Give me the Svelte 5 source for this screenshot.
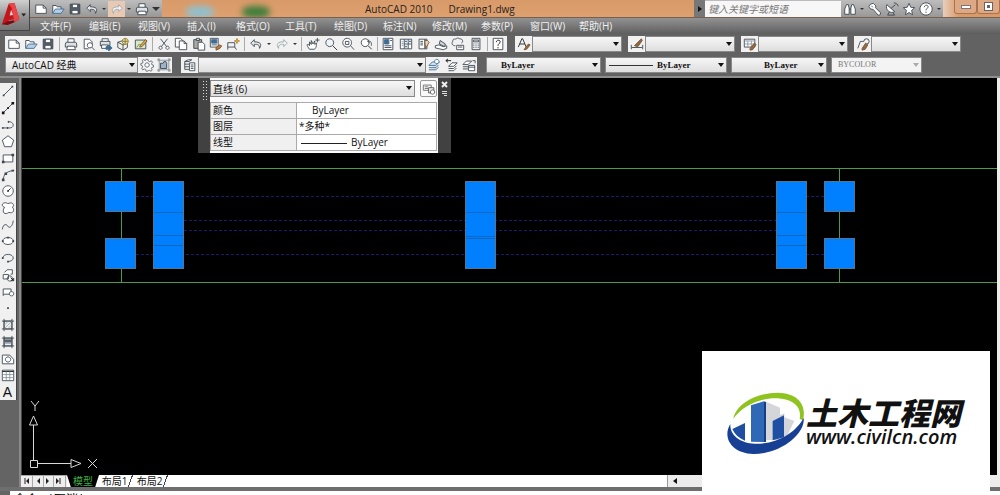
<script>
	const ink = '#3b4650';
	const blue = '#3f6c94';
	const gold = '#d9b24c';
	const brown = '#7a5230';

	// each icon is a list of [path, fill, stroke] on a 16 x 16 grid
	const icons = {
		new: [['M2 3.5h8.5l3.5 3.5v6H2z', '#fff', ink], ['M10.5 3.5V7H14', 'none', ink]],
		open: [['M2 13V4h4l1 1.500h4.500V8', '#fff', ink], ['M2 13l3-5h10l-3.500 5z', '#b7cfe6', blue]],
		save: [['M2.500 2.500h11v11h-11z', '#56616b', ink], ['M5 2.500h6v4H5z', '#fff', ink], ['M4.500 9.500h7v4h-7z', '#fff', ink]],
		print: [['M4.500 6V2h7v4', '#fff', ink], ['M2.500 6h11l1 2v3.500h-13V8z', '#dfe3e6', ink], ['M4 10.500h8l1 4H3z', '#fff', ink]],
		preview: [['M2.500 13.500v-11h6l3 3v3', '#fff', ink], ['M2.500 13.500h5', 'none', ink], ['M9 6.500a3 3 0 1 0 .1 0zM11 11.500l3.500 3.500', '#fff', ink]],
		publish: [['M3.500 5V2h7v3', '#fff', ink], ['M1.500 5h11v5h-11z', '#dfe3e6', ink], ['M3 9h7v4H3z', '#fff', ink], ['M8 11h3V9l4 3.500-4 3.500v-2H8z', blue, blue]],
		dwf: [['M2 6l6-2 5 3v5l-5 3-6-3z', '#f1f1e6', ink], ['M2 6l6 3v6M8 9l5-2', 'none', ink], ['M10.500 1.500a3.500 3.500 0 1 0 .1 0z', '#e3d58b', '#8b7d3a'], ['M7.500 5h6.500M10.500 1.500v7', 'none', '#8b7d3a']],
		sketch: [['M1.500 3.500h12v10h-12z', '#dce7c9', ink], ['M3 12l3-4 3 2 4-3', 'none', '#5b8a45'], ['M7 10l6-7 2 1.500-6 6.500-2.500.5z', gold, brown]],
		cut: [['M4 2l7 9M12 2l-7 9', 'none', ink], ['M4 10.500a1.800 1.800 0 1 0 .1 0zM12 10.500a1.800 1.800 0 1 0 .1 0z', '#fff', ink]],
		copy: [['M1.500 1.500h6l2 2v8h-8z', '#fff', ink], ['M6 4.500h5.500l3 3v7H6z', '#fff', ink], ['M11.500 4.500v3h3', 'none', ink]],
		paste: [['M2 3h9v10H2z', '#a9a9a0', ink], ['M5 1.500h3.500V4H5z', '#ddd', ink], ['M7 6h5l2.500 2.500v6.500H7z', '#fff', ink]],
		match: [['M1.500 1.500h9v10h-9z', '#fff', ink], ['M3 3h6v4H3z', blue, blue], ['M3 9h6', 'none', ink], ['M8 12l4-3 2.500 1-2 3-4.500 2z', '#b57f3c', brown]],
		block: [['M2 6.500h8v5H2zM2 11.500v3M10 11.500l2 3', 'none', ink], ['M12.500 1.500l.8 2.200 2.200.8-2.200.8-.8 2.200-.8-2.200-2.200-.8 2.200-.8z', gold, '#b58a2a']],
		undo: [['M6 3L2 7l4 4V8.500c4-.5 6 .5 6 4.500 3-5 1-7.500-6-7.500z', '#e4e8eb', ink]],
		redo: [['M10 3l4 4-4 4V8.500c-4-.5-6 .5-6 4.500-3-5-1-7.500 6-7.500z', '#f3f3f3', '#9aa3aa']],
		pan: [['M4 14c-3-4-3-5-2-6l2 2V5.500l2 3V4l2 4 2-3.500v4L12 7c0 4-1 7-3 7z', '#fff', ink], ['M13 1v5M10.500 3.500h5', 'none', ink]],
		zoom: [['M6.500 2a4.500 4.500 0 1 0 .1 0z', '#eef4f8', ink], ['M10 10l5 5', 'none', '#222']],
		zoomWindow: [['M7 1.500a5 5 0 1 0 .1 0z', '#fff', ink], ['M5 5h4v3.500H5z', 'none', ink], ['M11 10l4 4.500', 'none', ink]],
		zoomPrev: [['M7 2a4.500 4.500 0 1 0 .1 0z', '#fff', ink], ['M10.500 10l4 4', 'none', '#222'], ['M14 10c1-4-1-6-4-5l1-2M10 5l2 2', 'none', ink]],
		props: [['M2.500 1.500h11v13h-11z', '#fff', ink], ['M4 3h5v5H4z', blue, blue], ['M4 10h8M4 12h8M10.500 4h2', 'none', ink]],
		center: [['M1.500 2.500h13v11h-13z', '#fff', ink], ['M6 2.500v11M10.500 2.500v11M6 8h8', 'none', ink], ['M7.500 4.500h1v1h-1zM12 4.500h1v1h-1zM7.500 10.500h1v1h-1z', blue, blue], ['M3 5.500h2M3 7.500h2M3 9.500h2', 'none', '#89939b']],
		palette: [['M3.500 2.500h9v11h-9z', '#fff', ink], ['M10 2.500v11M5 5h3M5 7h3M5 9h3', 'none', ink], ['M10 4h3l2 2-4 7z', '#e2d7c3', brown]],
		sheetset: [['M1.500 10l4-1 5 2 4-1v3l-4 1.500-9-2z', '#fff', ink], ['M6 8l1-4 6 4-1 3z', '#ccd5dc', ink]],
		markup: [['M2 5c0-4 3-2 4-3 2-2 3 0 4 0 4 0 4 4 2 5', 'none', ink], ['M2 5c-2 3 0 5 3 5', 'none', ink], ['M6.500 9.500h8v5h-8z', '#fff', ink], ['M8 11.500h5', 'none', ink]],
		calc: [['M3.500 1.500h9v13h-9z', '#eee', ink], ['M5 3.500h6v2H5z', '#fff', ink], ['M5 8h1M7.500 8h1M10 8h1M5 10h1M7.500 10h1M10 10h1M5 12h1M7.500 12h1M10 12h1', 'none', ink]],
		help: [['M2.500 1.500h11v13h-11z', '#fff', ink], ['M6 6c0-3 4.500-3 4.500-.5C10.500 7.500 8 7 8 10M8 11.500v1.500', 'none', '#111']],
		textStyle: [['M1.500 11.500L5.500 2h1l4 9.500M3 8h6', 'none', '#222'], ['M9 13l4-5 2 1-4 5-3 .5z', '#8d6a44', brown]],
		dimStyle: [['M1.500 9v5M14.500 9v5M2 12h12', 'none', ink], ['M5 10l8-8 1 2-5 7z', '#8d6a44', brown]],
		tableStyle: [['M1.500 2.500h12v9h-12z', '#fff', ink], ['M1.500 4.500h12M1.500 8h12M5.500 4.500v7M9.500 4.500v7', 'none', '#89939b'], ['M8 13l5-6 2 1.500-4 6-3 .5z', '#8d6a44', brown]],
		leaderStyle: [['M2 13l3-8h4a3 3 0 1 1 3 3', 'none', ink], ['M7 13l4-6 2.500 2-3 5-3.500 1z', '#8d6a44', brown]],
		gear: [['M7 1.500h2l.5 2 1.500.7 2-1 1.200 1.500-1 1.800.4 1.200 2 .6v2l-2 .4-.6 1.300 1 1.800-1.500 1.300-1.800-1-1.300.4L9 15H7l-.6-2-1.300-.5-2 1L2 12l1-2-.5-1.200-1.500-.5v-2l2-.5.5-1.300-1-1.700L4 1.800l1.800 1L6.700 2.500z', '#f5f5f5', '#59636b'], ['M8 5.500a2.500 2.500 0 1 0 .1 0z', '#fff', '#59636b']],
		workspace: [['M2.500 2.500h11v11h-11z', '#d9dee2', '#87929a'], ['M4 12V6h3l1-2h2l1 2v6z', '#9db2c4', ink], ['M1 1h2v2H1zM13 1h2v2h-2zM1 13h2v2H1zM13 13h2v2h-2z', '#999', '#999']],
		layerManager: [['M2 4l4-2h4l-3 2zM2 4v9h5M2 7h5M2 10h5', 'none', ink], ['M7.500 5.500h6v9h-6z', '#fff', ink], ['M9 8h3M9 10h3M9 12h3', 'none', ink]],
		layerCurrent: [['M1 13.500h8l3-3M1 11h8l3-3M1 8.500h8l4-4H5z', '#d4e3ef', blue], ['M10 1.500a2.500 2.500 0 1 0 .1 0z', '#fff', blue]],
		layerPrev: [['M4 14.500h6l3-3M4 12h6l3-3M4 9.500h6l4-4H8z', '#fff', ink], ['M7 3H1M3.500 1L1 3l2.500 2', 'none', '#111']],
		layerState: [['M1 12.500h6M1 10h6M1 7.500h6l4-4H5z', '#fff', ink], ['M7.500 8.500h7v6h-7z', '#fff', ink], ['M7.500 10.500h7', 'none', ink], ['M12 3h3v3', 'none', ink]],
		binoculars: [['M2 14V8l2-5h2l1 4v7zM14 14V8l-2-5h-2L9 7v7z', '#fff', ink], ['M7 8h2', 'none', ink]],
		key: [['M3 2.500l3-1 3 3-.5 2 6 6-1 2.500h-2L6 8.500l-3-.5-2-3z', '#fff', ink], ['M4 4.500l1.500 1.500', 'none', ink]],
		dish: [['M2 3l9 8c-5 3-11-2-9-8z', '#fff', ink], ['M7 7l5-4M5 11l-2 4h8l-2-3M10 1c3 0 5 2 5 4', 'none', ink]],
		star: [['M8 1.500l2 4.500 4.500.5-3.500 3 1 5L8 12l-4 2.500 1-5-3.500-3L6 6z', '#fff', ink]],
		question: [['M8 1a7 7 0 1 0 .1 0z', '#fff', ink], ['M6 6c0-3 4.500-3 4.500-.5C10.500 7.500 8 7 8 9.500M8 11v1.500', 'none', ink]],
		line: [['M3 13L13 3', 'none', ink], ['M2 12h2v2H2zM12 2h2v2h-2z', ink, 'none']],
		xline: [['M2 14L14 2', 'none', ink], ['M1 12h3v3H1zM12 1h3v3h-3zM7 7h2v2H7z', '#111', 'none']],
		pline: [['M2 12.500h8c6 0 5-8-2-7', 'none', ink], ['M1.500 12h1v1h-1zM7 12h1v1H7zM8 5h1v1H8z', ink, ink]],
		polygon: [['M8 2l6.500 5-2.500 7.500H4L1.500 7z', '#fff', ink]],
		rect: [['M2.500 4.500h11v8h-11z', '#fff', ink], ['M1 11h3v3H1zM12 3h3v3h-3z', ink, 'none']],
		arc: [['M2.500 14C3 7 6 4 14 3', 'none', ink], ['M1 12h3v3H1zM4 5h3v3H4zM12 2h3v2h-3z', ink, 'none']],
		circle: [['M8 2a6 6 0 1 0 .1 0z', '#fff', ink], ['M8 8l3-3M7.500 7.500h1v1h-1z', 'none', '#111']],
		cloud: [['M4 7c-4-1-3-5 1-5 2 0 2 1 3 1 6-3 8 3 5 4 3 3 1 8-4 6-4 3-9 1-5-6z', '#fff', ink]],
		spline: [['M1.500 13c1-7 5-6 6-4 2 4 6 0 6.500-6', 'none', ink]],
		ellipse: [['M8 4c8 0 8 8 0 8s-8-8 0-8z', '#fff', ink], ['M7 3h2v2H7zM1 7h2v2H1zM13 7h2v2h-2z', ink, 'none']],
		ellipseArc: [['M2 8c1-6 12-5 12 0 0 3-4 4-6 4', 'none', ink], ['M1 7h2v2H1zM7 11h2v2H7z', ink, 'none']],
		insert: [['M4 5l3-3h6v5h-2', '#fff', ink], ['M2.500 7.500h6v5h-6zM10 9a3 3 0 1 0 .1 0z', '#fff', ink], ['M11 11l3 3M14.500 11.500v3h-3', 'none', '#111']],
		makeBlock: [['M2.500 4.500h9v6h-9z', '#fff', ink], ['M2.500 10.500v2M12 7.500a2.500 2.500 0 1 0 .1 0z', '#fff', ink]],
		point: [['M7 7h2v2H7z', ink, 'none']],
		hatch: [['M3.500 3.500h9v9h-9z', '#eee', ink], ['M3.500 1v14M12.500 1v14M1 3.500h14M1 12.500h14', 'none', ink], ['M4 12l8-8M4 8l4-4M8 12l4-4', 'none', '#a5adb3']],
		gradient: [['M3.500 3.500h9v9h-9z', '#eee', ink], ['M4 5h8v3H4z', '#56616b', 'none'], ['M4 8h8v2H4z', '#9aa3aa', 'none'], ['M3.500 1v14M12.500 1v14M1 3.500h14M1 12.500h14', 'none', ink]],
		region: [['M1.500 3.500H10l4.500 5v5h-13z', '#fff', ink], ['M8 5.500a3 3 0 1 0 .1 0z', '#fff', ink]],
		table: [['M1.500 2.500h13v12h-13z', '#fff', ink], ['M1.500 4h13', 'none', '#111'], ['M1.500 7.500h13M1.500 11h13M6 4v10M10 4v10', 'none', '#89939b']],
		quick: [['M1.500 3.500h9v6h-9zM3 5.500h4M3 7.500h4', '#fff', '#666'], ['M7.500 6.500h6v6h-6z', '#eee', '#555'], ['M12 9a2.500 2.500 0 1 0 .1 0z', '#fff', '#555']]
	};

	const quickAccess = ['new', 'open', 'save', 'undo', 'drop', 'redo', 'drop', 'print'];
	const menus = ['文件(F)', '编辑(E)', '视图(V)', '插入(I)', '格式(O)', '工具(T)', '绘图(D)', '标注(N)', '修改(M)', '参数(P)', '窗口(W)', '帮助(H)'];
	const standard = 'new open save | print preview publish dwf sketch | cut copy paste match block | undo drop redo drop | pan zoom zoomWindow zoomPrev | props center palette sheetset markup calc | help'.split(' ');
	const styleBars = ['textStyle', 'dimStyle', 'tableStyle', 'leaderStyle'];
	const drawTools = ['line', 'xline', 'pline', 'polygon', 'rect', 'arc', 'circle', 'cloud', 'spline', 'ellipse', 'ellipseArc', 'insert', 'makeBlock', 'point', 'hatch', 'gradient', 'region', 'table', 'mtext'];

	const grips = [
		{ x: 83, y: 103, h: 31, seams: [] },
		{ x: 83, y: 160, h: 31, seams: [] },
		{ x: 131, y: 103, h: 88, seams: [134, 157, 167] },
		{ x: 443, y: 103, h: 88, seams: [134, 158, 160] },
		{ x: 754, y: 103, h: 88, seams: [134, 157, 167] },
		{ x: 802, y: 103, h: 31, seams: [] },
		{ x: 802, y: 160, h: 31, seams: [] }
	];
</script>

{#snippet icon(name)}
	<svg class="icon" viewBox="0 0 16 16" aria-hidden="true">
		{#each icons[name] as [d, fill, stroke]}
			<path {d} {fill} {stroke} />
		{/each}
	</svg>
{/snippet}

{#snippet tool(name)}
	{#if name === '|'}
		<i class="sep"></i>
	{:else if name === 'drop'}
		<button class="drop" aria-label="drop"></button>
	{:else if name === 'mtext'}
		<button class="tool mtext">A</button>
	{:else}
		<button class="tool" class:hot={name === 'redo'} aria-label={name}>{@render icon(name)}</button>
	{/if}
{/snippet}

{#snippet combo(label, kind, value)}
	<span class="combo {kind}">
		<select aria-label={label} disabled={kind === 'plot'}><option>{value}</option></select>
	</span>
{/snippet}

<div class="app">
	<header>
		<button class="logo" aria-label="application menu">
			<svg viewBox="0 0 30 31">
				<path d="M2 25L9 4l6-1 5 17-5 3-1-3-5 1-1 4z" fill="#c3161c" />
				<path d="M9 4l6-1 5 17-5 3-3-15z" fill="#e8484a" />
				<path d="M2 25l6-3 6-1 1 2-7 3z" fill="#7d0a0e" />
				<path d="M10 16l1.500-6 2 5.500z" fill="#f6d6d2" />
				<path d="M22 14h5l-2.500 3z" fill="#222" />
			</svg>
		</button>
		<div class="titlebar">
			<div class="quick">
				{#each quickAccess as name}{@render tool(name)}{/each}
				<button class="drop big" aria-label="customize"></button>
			</div>
			<div class="glass"><i class="blob sky"></i><i class="blob leaf"></i></div>
			<h1><span>AutoCAD 2010</span><span>Drawing1.dwg</span></h1>
			<div class="info">
				<button class="expand" aria-label="expand"></button>
				<input placeholder="键入关键字或短语" aria-label="search" />
				{@render tool('binoculars')}
				<button class="drop" aria-label="drop"></button>
				{#each ['key', 'dish', 'star', 'question'] as name}{@render tool(name)}{/each}
				<button class="drop" aria-label="drop"></button>
			</div>
			<div class="window">
				<button aria-label="minimize"><i class="min"></i></button>
				<button aria-label="restore"><i class="max"></i></button>
			</div>
		</div>
		<nav>
			{#each menus as menu}<button>{menu}</button>{/each}
		</nav>
	</header>

	<div class="bar first">
		<div class="panel standard">
			{#each standard as name}{@render tool(name)}{/each}
		</div>
		<div class="styles">
			{#each styleBars as name}
				<div class="panel">{@render tool(name)}{@render combo(name, 'style', '')}</div>
			{/each}
		</div>
	</div>

	<div class="bar second">
		<div class="panel">
			{@render combo('workspace', 'space', 'AutoCAD 经典')}
			{@render tool('gear')}{@render tool('workspace')}
		</div>
		<div class="panel">
			{@render tool('layerManager')}
			{@render combo('layer', 'layer', '')}
			{@render tool('layerCurrent')}{@render tool('layerPrev')}{@render tool('layerState')}
		</div>
		<div class="properties">
			{@render combo('color', 'color serif', 'ByLayer')}
			{@render combo('linetype', 'linetype serif', 'ByLayer')}
			{@render combo('lineweight', 'weight serif', 'ByLayer')}
			{@render combo('plot style', 'plot', 'BYCOLOR')}
		</div>
	</div>

	<main>
		<aside>
			<div class="draw">
				{#each drawTools as name}{@render tool(name)}{/each}
			</div>
		</aside>
		<section class="document">
			<div class="canvas">
				<svg class="drawing">
					<g stroke="#1a1a70" stroke-dasharray="3 2">
						{#each [118, 142, 152, 176] as y, i}
							<line x1={i % 3 ? 162 : 114} x2={i % 3 ? 754 : 802} y1={y + 0.5} y2={y + 0.5} />
						{/each}
					</g>
					<g stroke="#4f9a4a">
						<line x1="0" x2="100%" y1="90.500" y2="90.500" />
						<line x1="0" x2="100%" y1="204.500" y2="204.500" />
						<path d="M99.500 90v114M817.500 90v114" />
					</g>
					{#each grips as { x, y, h, seams }}
						<rect x={x + 0.5} y={y + 0.5} width="30" height={h - 1} fill="#0080ff" stroke="#527792" />
						{#each seams as seam}
							<line x1={x + 1} x2={x + 30} y1={seam + 0.5} y2={seam + 0.5} stroke="#0f68bd" />
						{/each}
					{/each}
					<g stroke="#d8d8d8" fill="none">
						<path d="M8.500 382.500h7v7h-7zM11.500 382V347M16 385.500h33" />
						<path d="M11.500 338l-4 9h8zM59 385.500l-10-4v8z" />
						<path d="M9 323l4 5 4-5M13 328v5M66 381l9 9M75 381l-9 9" />
					</g>
				</svg>

				<div class="float">
					<i class="handle"></i>
					<div class="fields">
						<div class="pick">
							{@render combo('selection', 'chosen', '直线 (6)')}
							<button aria-label="customize">{@render icon('quick')}</button>
						</div>
						<table>
							<tbody>
								<tr><th>颜色</th><td class="indent">ByLayer</td></tr>
								<tr><th>图层</th><td>*多种*</td></tr>
								<tr><th>线型</th><td><i class="stroke"></i>ByLayer</td></tr>
							</tbody>
						</table>
					</div>
					<div class="ends">
						<button aria-label="close">
							<svg viewBox="0 0 7 7"><path d="M1 1l5 5M6 1L1 6" stroke="#eee" stroke-width="2" /></svg>
						</button>
						<button aria-label="options">
							<svg viewBox="0 0 7 7"><path d="M1 1.500h5M1 3.500h5M3 5.500h3" stroke="#ddd" /></svg>
						</button>
					</div>
				</div>
			</div>
			<div class="tabs">
				<svg class="steps" viewBox="0 0 46 12">
					<path d="M0 .5h46M11.500 0v12M22.500 0v12M32.500 0v12M44.500 0v12" stroke="#aaa" />
					<path d="M4 3v6M39 3v6" stroke="#222" />
					<path d="M8 3v6L5 6zM19 3v6l-3-3zM25 3v6l3-3zM35 3v6l3-3z" fill="#222" />
				</svg>
				<button class="active">模型</button>
				<button>布局1</button>
				<button>布局2</button>
				<div class="scroll">
					<svg viewBox="0 0 6 12"><path d="M5 3v6L1 6z" fill="#111" /></svg>
				</div>
			</div>
		</section>
		<i class="edge"></i>
	</main>
	<footer><p>命令:&nbsp; *取消*</p></footer>

	<div class="brand">
		<svg viewBox="258 150 240 195">
			<path d="M280 233c10-47 73-78 134-78 58 1 87 35 75 83l-10-4c6-31-11-55-55-61-57-7-113 18-144 60z" fill="#8fc31f" />
			<path d="M375 181l45 19v22l13-5v12l30 11-28 57h-60z" fill="#d4d6d9" />
			<path d="M333 193l39-12v122l-39-1z" fill="#2f68b4" />
			<path d="M372 181l6 3v119h-6z" fill="#163e86" />
			<path d="M277 264l38-18v53c-18-7-31-19-38-35zM398 240l34-17v66l-34 9z" fill="#1f4fa3" />
			<path d="M271 249c-2 41 42 62 90 59 62-4 108-38 130-77 6 47-69 109-151 108-65-2-94-49-69-90z" fill="#173f94" />
		</svg>
		<div><strong>土木工程网</strong><span>www.civilcn.com</span></div>
	</div>
</div>

<style>
	:global(body) {
		font-family: 'Open Sans', 'Noto Sans CJK SC', sans-serif;
		font-size: 10px;
		background: #646464;
	}

	.app {
		position: relative;
		display: flex;
		flex-direction: column;
		height: 100vh;
		overflow: hidden;
	}

	button,
	select,
	input {
		font: inherit;
		border: 0;
		padding: 0;
		margin: 0;
		border-radius: 0;
		background: none;
	}

	.icon {
		display: block;
		width: 14px;
		height: 14px;
		flex: none;
	}

	/* title and menu */
	header {
		display: grid;
		grid-template: 18px 16px / 30px 1fr;
	}

	.logo {
		grid-row: 1 / 3;
		height: 31px;
		background: linear-gradient(#d0d0d0, #8f8f8f 60%, #757575);
		border-right: 1px solid #444;
		border-bottom: 1px solid #444;
	}

	.logo svg {
		display: block;
		width: 100%;
	}

	.titlebar {
		display: flex;
		background: linear-gradient(#d99a69, #dfa06f);
		border-bottom: 1px solid #77604e;
	}

	.quick,
	.info {
		display: flex;
		align-items: center;
		background: linear-gradient(#bdbdbd, #989898);
	}

	.quick {
		width: 132px;
		padding-left: 2px;
		box-sizing: border-box;
		justify-content: space-between;
	}

	.quick .hot {
		background: #e8c9b4;
	}

	.glass {
		display: flex;
		width: 203px;
		gap: 28px;
		padding-left: 24px;
		box-sizing: border-box;
		overflow: hidden;
	}

	.blob {
		width: 28px;
		height: 12px;
		margin-top: 6px;
		border-radius: 40%;
		filter: blur(3px);
	}

	.sky {
		background: #8fc1cf;
	}

	.leaf {
		background: #3f7d3c;
	}

	h1 {
		display: flex;
		flex: 1;
		gap: 16px;
		margin: 0;
		font-size: 10px;
		font-weight: 400;
		line-height: 18px;
		color: #222;
	}

	.info {
		width: 249px;
		justify-content: space-between;
	}

	.expand {
		width: 11px;
		height: 17px;
		background: #777;
	}

	.expand::before {
		content: '';
		display: block;
		margin-left: 4px;
		border: 3px solid transparent;
		border-left: 4px solid #111;
	}

	.info input {
		width: 136px;
		height: 16px;
		padding-left: 3px;
		box-sizing: border-box;
		background: #f7f7f7;
		font-style: italic;
	}

	.info input::placeholder {
		color: #777;
	}

	.window {
		display: flex;
		width: 57px;
		padding-left: 11px;
		box-sizing: border-box;
		background: linear-gradient(90deg, #e8cdbb, #d99a69 16px);
	}

	.window button {
		display: grid;
		place-items: center;
		width: 24px;
		height: 14px;
		border: 1px solid #a8744f;
		border-top: 0;
		background: #dda883;
		border-radius: 0 0 3px 3px;
	}

	.min {
		width: 8px;
		height: 2px;
		border: 1px solid #777;
		background: #fff;
	}

	.max {
		width: 3px;
		height: 3px;
		border: 2px solid #fff;
		outline: 1px solid #666;
		background: #666;
	}

	nav {
		display: flex;
		gap: 18px;
		padding-left: 10px;
		background: linear-gradient(#929292, #5e5e5e);
	}

	nav button {
		flex: none;
		width: 31px;
		color: #f0f0f0;
		line-height: 16px;
		white-space: nowrap;
		text-align: left;
	}

	/* toolbars */
	.bar {
		display: flex;
		align-items: center;
		background: #626262;
		padding-left: 5px;
		flex: none;
	}

	.first {
		height: 19px;
	}

	.second {
		height: 25px;
		gap: 9px;
		border-bottom: 2px solid #8e8e8e;
		box-sizing: border-box;
	}

	.panel {
		display: flex;
		align-items: center;
		height: 16px;
		background: #f1f1f1;
	}

	.standard {
		width: 502px;
		justify-content: space-between;
	}

	.styles {
		display: flex;
		gap: 6px;
		margin-left: 8px;
	}

	.tool {
		display: grid;
		place-items: center;
		width: 17px;
		height: 16px;
		flex: none;
	}

	.sep {
		width: 1px;
		height: 14px;
		margin: 0 2px;
		background: #aaa;
	}

	.drop {
		width: 8px;
	}

	.drop::before {
		content: '';
		display: block;
		width: 0;
		margin: 0 auto;
		border: 2px solid transparent;
		border-top-color: #333;
		border-bottom: 0;
	}

	.drop.big {
		width: 12px;
	}

	.drop.big::before {
		border-width: 4px;
		border-bottom: 0;
	}

	.combo {
		position: relative;
		display: block;
		height: 16px;
	}

	.combo::after {
		content: '';
		position: absolute;
		right: 3px;
		top: 6px;
		border: 3px solid transparent;
		border-top: 4px solid #111;
		border-bottom: 0;
		pointer-events: none;
	}

	.combo select {
		appearance: none;
		display: block;
		width: 100%;
		height: 16px;
		padding: 0 12px 0 6px;
		border: 1px solid #888;
		background: linear-gradient(#f6f6f6, #dedede);
		color: #111;
		opacity: 1;
	}

	.style {
		width: 90px;
	}

	.space {
		width: 133px;
	}

	.layer {
		width: 228px;
	}

	.properties {
		display: flex;
		gap: 4px;
	}

	.serif select {
		font-family: 'Liberation Serif', serif;
		font-size: 9px;
		font-weight: 700;
	}

	.color {
		width: 115px;
	}

	.color select {
		padding-left: 14px;
	}

	.linetype {
		width: 122px;
	}

	.linetype select {
		padding-left: 51px;
		background:
			linear-gradient(#333, #333) 3px 7px / 44px 1px no-repeat,
			linear-gradient(#f6f6f6, #dedede);
	}

	.weight {
		width: 96px;
	}

	.weight select {
		padding-left: 32px;
	}

	.plot {
		width: 91px;
	}

	.plot select {
		font-family: 'Liberation Serif', serif;
		font-size: 8px;
		background: #f3f3f3;
		color: #777;
	}

	.plot::after {
		border-top-color: #aaa;
	}

	/* workspace */
	main {
		display: flex;
		flex: 1;
		min-height: 0;
	}

	aside {
		width: 21px;
		padding-top: 5px;
		box-sizing: border-box;
		border-right: 2px solid #8a8a8a;
		background: #646464;
		flex: none;
	}

	.draw {
		display: flex;
		flex-direction: column;
		justify-content: space-between;
		width: 16px;
		height: 317px;
		background: #f0f0f0;
		border-right: 1px solid #444;
	}

	.draw .tool {
		width: 15px;
		flex: none;
	}

	.mtext {
		font-family: 'Liberation Sans', sans-serif;
		font-size: 14px;
		line-height: 16px;
		color: #111;
	}

	.document {
		display: flex;
		flex-direction: column;
		flex: 1;
		min-width: 0;
	}

	.canvas {
		position: relative;
		flex: 1;
		min-height: 0;
		background: #000;
		border-left: 1px solid #444;
	}

	.drawing {
		position: absolute;
		inset: 0;
		width: 100%;
		height: 100%;
	}

	.edge {
		width: 3px;
		background: #ececec;
	}

	.float {
		position: absolute;
		left: 176px;
		top: 0;
		display: flex;
		width: 253px;
		height: 75px;
		background: #414141;
	}

	.handle {
		width: 7px;
		height: 20px;
		margin: 2px 1px 0 4px;
		background: radial-gradient(#ddd 1px, transparent 1px) 0 0 / 3px 3px;
	}

	.fields {
		flex: 1;
		padding: 2px 1px 0 0;
		background: #fafafa;
	}

	.pick {
		display: flex;
		gap: 5px;
		margin-bottom: 5px;
	}

	.chosen {
		flex: 1;
		height: 17px;
	}

	.chosen select {
		height: 17px;
		padding-left: 2px;
	}

	.pick button {
		display: grid;
		place-items: center;
		width: 17px;
		height: 17px;
		border: 1px solid #999;
		border-radius: 2px;
	}

	table {
		width: 100%;
		border-collapse: collapse;
		background: #fff;
		line-height: 15px;
		color: #111;
	}

	th,
	td {
		height: 15px;
		padding: 0 2px;
		border: 1px solid #aaa;
		text-align: left;
		font-weight: 400;
	}

	th {
		width: 81px;
		background: #f0f0f0;
	}

	td.indent {
		padding-left: 15px;
	}

	.stroke {
		display: inline-block;
		width: 46px;
		height: 1px;
		margin: 0 4px 0 2px;
		background: #222;
		vertical-align: middle;
	}

	.ends {
		display: flex;
		flex-direction: column;
		gap: 2px;
		width: 13px;
		padding-top: 3px;
		box-sizing: border-box;
	}

	.ends button {
		display: grid;
		place-items: center;
		height: 7px;
	}

	.ends svg {
		width: 7px;
		height: 7px;
	}

	.tabs {
		display: flex;
		height: 12px;
		flex: none;
		background: #fff;
	}

	.steps {
		width: 46px;
		background: #eee;
	}

	.tabs button {
		width: 35px;
		padding-right: 4px;
		line-height: 12px;
		color: #111;
		background: linear-gradient(110deg, transparent 0 31px, #444 31px 32px, transparent 32px);
	}

	.tabs .active {
		width: 32px;
		padding: 0;
		background: #000;
		color: #3fae3f;
		clip-path: polygon(0 0, 100% 0, 88% 100%, 12% 100%);
	}

	.scroll {
		width: 330px;
		margin-left: auto;
		padding-left: 4px;
		box-sizing: border-box;
		border-left: 1px solid #999;
		background: #ececec;
	}

	.scroll svg {
		display: block;
		width: 6px;
		height: 12px;
	}

	footer {
		flex: none;
		height: 4px;
		padding-left: 14px;
		border-top: 4px solid #6e6e6e;
		background: linear-gradient(90deg, #646464 10px, #fff 10px);
		overflow: hidden;
	}

	footer p {
		margin: 0;
		line-height: 17px;
		font-size: 12px;
	}

	.brand {
		position: absolute;
		right: 10px;
		bottom: 0;
		display: flex;
		align-items: center;
		width: 288px;
		height: 144px;
		padding-left: 24px;
		box-sizing: border-box;
		background: #fff;
	}

	.brand svg {
		width: 80px;
		height: 65px;
		flex: none;
	}

	.brand div {
		display: flex;
		flex-direction: column;
		font-style: italic;
		color: #111;
	}

	.brand strong {
		font: italic 900 31px/28px 'Noto Sans CJK SC', sans-serif;
	}

	.brand span {
		font: italic 600 20px/22px 'Open Sans', sans-serif;
	}
</style>
